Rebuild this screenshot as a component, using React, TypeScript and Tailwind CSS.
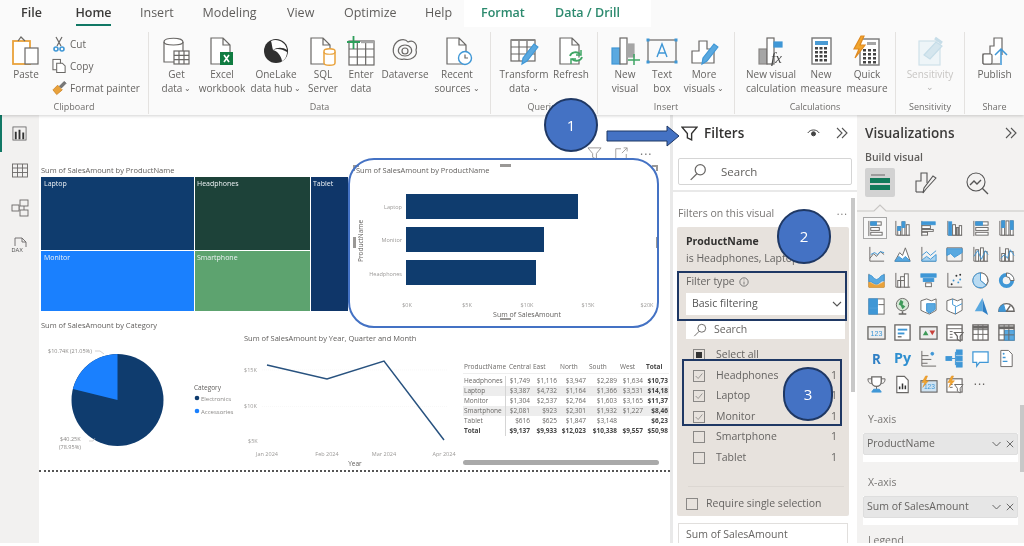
import React from 'react';

const G = '#6a6866';
const B = '#3f97d6';
const O = '#e9a23b';
const font = { fontFamily: '"Open Sans", sans-serif' };

function RI({ children }: { children: React.ReactNode }) {
  return <svg viewBox="0 0 32 32" className="w-[32px] h-[32px] shrink-0" fill="none" stroke={G} strokeWidth="1.2">{children}</svg>;
}
const Doc = ({ x = 6, w = 17, h = 26 }: { x?: number; w?: number; h?: number }) => (
  <path d={`M${x} 3h${w - 7}l7 7v${h - 7}h-${w}z M${x + w - 7} 3v7h7`} fill="#fff" />
);
const TableG = ({ x, y, w, h }: { x: number; y: number; w: number; h: number }) => (
  <g>
    <rect x={x} y={y} width={w} height={h} fill="#fff" />
    <path d={`M${x} ${y + h / 3}h${w}M${x} ${y + (2 * h) / 3}h${w}M${x + w / 3} ${y}v${h}M${x + (2 * w) / 3} ${y}v${h}`} />
  </g>
);
const Pencil = () => (
  <g>
    <path d="M30 12l-11 14-5 3 1-6 11-14z" fill="#5aa9e0" stroke={B} />
  </g>
);
const Bars = () => <path d="M4 28V16h7V6h8v8h7v14z" fill="#fff" />;

const ribbonIcons: Record<string, React.ReactNode> = {
  paste: <RI><rect x="3" y="6" width="17" height="23" stroke={O} strokeWidth="1.8" fill="#fff" /><path d="M8 6l3-4 4 4" stroke={G} /><rect x="15" y="13" width="13" height="16" fill="#fff" /></RI>,
  getdata: <RI><path d="M3 7c0-5 19-5 19 0v20H3z" fill="#fff" /><path d="M3 7c0 4 19 4 19 0" /><TableG x={13} y={16} w={15} h={13} /></RI>,
  excel: <RI><Doc x={5} w={19} /><rect x="14" y="17" width="13" height="13" fill="#107c41" stroke="none" /><path d="M18 20l5 7M23 20l-5 7" stroke="#fff" strokeWidth="1.6" /></RI>,
  onelake: <RI><circle cx="16" cy="16" r="12" fill="#2f2f2f" stroke="none" /><path d="M11 6c6-3 15 1 16 9-4-3-10-3-14 0-1-3-1-6-2-9z" fill="#fff" stroke="none" /><path d="M13 15c4 1 8 5 9 11 3-1 5-5 5-9-5-3-10-4-14-2z" fill="#fff" stroke="none" /></RI>,
  sql: <RI><Doc x={4} w={19} /><path d="M17 16c0-3 11-3 11 0v12c0 3-11 3-11 0z" stroke={O} strokeWidth="1.5" fill="#fff" /><path d="M17 17c0 3 11 3 11 0" stroke={O} /></RI>,
  enter: <RI><TableG x={4} y={6} w={25} h={24} /><path d="M2 7h13M8.5 1v13" stroke="#2e9e5b" strokeWidth="1.8" /><path d="M16 7h13" stroke="#a6a6a6" strokeWidth="2.4" /></RI>,
  dataverse: <RI><path d="M5 11c3-7 11-8 14-4 5-3 10 2 8 8 2 6-5 11-12 9C9 26 2 20 5 11z" /><path d="M10 13c3-4 9-4 12 0 2 4-1 8-6 8s-8-4-6-8z" /><circle cx="16" cy="16" r="3" /></RI>,
  recent: <RI><Doc x={6} w={19} /><circle cx="24" cy="23" r="6.5" stroke={B} fill="#fff" strokeWidth="1.4" /><path d="M24 19.5V23h3" stroke={G} /></RI>,
  transform: <RI><TableG x={3} y={5} w={24} h={21} /><path d="M3 5h24" stroke="#8a8886" strokeWidth="2" /><Pencil /></RI>,
  refresh: <RI><Doc x={5} w={19} /><path d="M15 21c1-4 7-5 10-2M27 22c-1 4-7 5-10 2" stroke="#3fa564" strokeWidth="1.8" fill="#fff" /><path d="M26 15v5h-5M16 29v-5h5" stroke="#3fa564" strokeWidth="1.5" /></RI>,
  newvisual: <RI><rect x="3" y="13" width="8" height="16" fill="#5aa9e0" stroke={B} /><rect x="11" y="3" width="7" height="26" fill="#fff" /><rect x="18" y="9" width="7" height="13" fill="#a6a6a6" stroke="#a6a6a6" /><path d="M25 19v11M19 25h12" stroke="#3fa564" strokeWidth="1.5" /></RI>,
  textbox: <RI><rect x="2" y="5" width="28" height="22" stroke={G} /><path d="M11 22l5-13 5 13M13 18h6" stroke={B} strokeWidth="1.4" /><g fill={B} stroke="none"><rect x="0.5" y="3.5" width="3" height="3" /><rect x="28.5" y="3.5" width="3" height="3" /><rect x="0.5" y="25.5" width="3" height="3" /><rect x="28.5" y="25.5" width="3" height="3" /></g></RI>,
  more: <RI><Bars /><Pencil /></RI>,
  visualcalc: <RI><rect x="4" y="14" width="8" height="15" fill="#a6a6a6" stroke="#8a8886" /><rect x="12" y="3" width="7" height="26" fill="#fff" /><rect x="19" y="7" width="8" height="5" fill={B} stroke={B} /><text x="16" y="28" fontFamily="Liberation Serif, serif" fontStyle="italic" fontSize="15" fill="#444" stroke="none">fx</text></RI>,
  measure: <RI><rect x="7" y="3" width="19" height="26" fill="#fff" stroke="#777" strokeWidth="1.4" /><rect x="10" y="6" width="13" height="4" fill="#4a9bd4" stroke="none" /><g fill="#444" stroke="none">{[13, 17, 21, 25].map((y) => [10, 14.5, 19].map((x) => <rect key={`${x}-${y}`} x={x} y={y - 1} width="3" height="2.5" />))}</g></RI>,
  quick: <RI><rect x="9" y="4" width="19" height="26" fill="#fff" stroke="#777" strokeWidth="1.4" /><rect x="16" y="7" width="9" height="3" fill="#a6a6a6" stroke="none" /><g fill="#444" stroke="none">{[15, 19, 23, 27].map((y) => [12, 17, 22].map((x) => <rect key={`${x}-${y}`} x={x} y={y - 1} width="3" height="2.5" />))}</g><path d="M10 1L3 14h5l-4 9 10-13H9l4-9z" fill="#f0a52e" stroke="#e08a20" /></RI>,
  sensitivity: <RI><rect x="5" y="6" width="21" height="24" stroke="#cfe1ea" fill="#eef5f8" /><path d="M10 20l12-13 6 4-12 13z" fill="#d5e6ee" stroke="#c6dde8" /><path d="M21 3l7 5" stroke="#c6dde8" strokeWidth="3" /></RI>,
  publish: <RI><path d="M4 29V19h7V11h4V3h8v17" fill="#fff" /><path d="M4 29h17" /><rect x="4" y="19" width="9" height="10" rx="1.5" fill="#fff" /><path d="M22 30V14M16 20l6-6 6 6" stroke={B} strokeWidth="1.5" /></RI>,
};

type Item = { i: string; w: string; l: React.ReactNode };
const chev = <span className="text-[8px] ml-[2px] align-[1px]">⌄</span>;
const groups: { name: string; w: string; pl: string; items: Item[] }[] = [
  { name: 'Data', w: 'w-[342px]', pl: 'pl-[6px]', items: [
    { i: 'getdata', w: 'w-[43px]', l: <>Get<br />data{chev}</> },
    { i: 'excel', w: 'w-[48px]', l: <>Excel<br />workbook</> },
    { i: 'onelake', w: 'w-[60px]', l: <>OneLake<br />data hub{chev}</> },
    { i: 'sql', w: 'w-[34px]', l: <>SQL<br />Server</> },
    { i: 'enter', w: 'w-[42px]', l: <>Enter<br />data</> },
    { i: 'dataverse', w: 'w-[46px]', l: <>Dataverse</> },
    { i: 'recent', w: 'w-[58px]', l: <>Recent<br />sources{chev}</> },
  ] },
  { name: 'Queries', w: 'w-[107px]', pl: 'pl-[7px]', items: [
    { i: 'transform', w: 'w-[52px]', l: <>Transform<br />data{chev}</> },
    { i: 'refresh', w: 'w-[42px]', l: <>Refresh</> },
  ] },
  { name: 'Insert', w: 'w-[137px]', pl: 'pl-[7px]', items: [
    { i: 'newvisual', w: 'w-[40px]', l: <>New<br />visual</> },
    { i: 'textbox', w: 'w-[34px]', l: <>Text<br />box</> },
    { i: 'more', w: 'w-[50px]', l: <>More<br />visuals{chev}</> },
  ] },
  { name: 'Calculations', w: 'w-[161px]', pl: 'pl-[7px]', items: [
    { i: 'visualcalc', w: 'w-[58px]', l: <>New visual<br />calculation</> },
    { i: 'measure', w: 'w-[42px]', l: <>New<br />measure</> },
    { i: 'quick', w: 'w-[50px]', l: <>Quick<br />measure</> },
  ] },
];

function RItem({ it }: { it: Item }) {
  return (
    <div className={`${it.w} flex flex-col items-center`}>
      {ribbonIcons[it.i]}
      <div className="text-[10px] leading-[14px] text-center whitespace-nowrap text-[#666462]">{it.l}</div>
    </div>
  );
}

function Group({ name, w, children, last }: { name: string; w: string; children: React.ReactNode; last?: boolean }) {
  return (
    <div className={`${w} flex flex-col ${last ? '' : 'border-r border-[#e4e2e0]'}`}>
      <div className="flex h-[69px] pt-[3px]">{children}</div>
      <div className="text-[9px] leading-[12px] text-center text-[#6f6d6b]">{name}</div>
    </div>
  );
}

function Ribbon() {
  return (
    <div className="h-[115px] bg-[#fafafa] shadow-[0_1px_3px_rgba(0,0,0,0.18)] relative z-10">
      <div className="h-[27px] flex items-center text-[12.5px] text-[#5f5d5b] whitespace-nowrap">
        <div className="ml-[21px] w-[20px] font-semibold text-[#3b3a39] text-center">File</div>
        <div className="ml-[35px] w-[35px] h-full flex flex-col items-center justify-center relative font-semibold text-[#3b3a39]">
          Home
          <div className="absolute bottom-[1px] left-0 right-0 h-[2px] bg-[#117865]" />
        </div>
        <div className="ml-[29px] w-[32px] text-center">Insert</div>
        <div className="ml-[30px] w-[55px] text-center">Modeling</div>
        <div className="ml-[30px] w-[27px] text-center">View</div>
        <div className="ml-[30px] w-[52px] text-center">Optimize</div>
        <div className="ml-[29px] w-[27px] text-center">Help</div>
        <div className="ml-[12px] h-full flex items-center bg-white pl-[17px] pr-[32px] gap-[32px] font-semibold text-[#2c8a6e]">
          <span className="w-[42px] text-center">Format</span>
          <span className="w-[64px] text-center">Data / Drill</span>
        </div>
      </div>
      <div className="h-[88px] flex pt-[5px] pb-[1px]">
        <Group name="Clipboard" w="w-[149px]">
          <div className="w-[52px] flex flex-col items-center">
            {ribbonIcons.paste}
            <div className="text-[10px] leading-[14px] text-[#666462]">Paste</div>
          </div>
          <div className="flex flex-col gap-[4px] text-[10px] leading-[18px] text-[#666462] whitespace-nowrap">
            <div className="flex items-center gap-[4px]">
              <svg viewBox="0 0 14 16" className="w-[14px] h-[16px]" fill="none" stroke={G} strokeWidth="1.2"><path d="M4 1l5 9M10 1L5 10" /><circle cx="4" cy="13" r="2" stroke={B} strokeWidth="1.6" /><circle cx="10" cy="13" r="2" stroke={B} strokeWidth="1.6" /></svg>
              Cut
            </div>
            <div className="flex items-center gap-[3px]">
              <svg viewBox="0 0 16 16" className="w-[15px] h-[16px]" fill="#fff" stroke={G} strokeWidth="1.1"><rect x="1" y="1" width="8" height="11" /><path d="M5 5h6l3 3v7H5z" /></svg>
              Copy
            </div>
            <div className="flex items-center gap-[3px]">
              <svg viewBox="0 0 16 16" className="w-[15px] h-[16px]" fill={O} stroke="#c97f1e" strokeWidth="0.8"><path d="M1 10l5-5 5 5-6 5z" /><path d="M8 6l5-5 2 2-5 5z" fill="#777" stroke="#555" /></svg>
              Format painter
            </div>
          </div>
        </Group>
        {groups.map((g) => (
          <Group key={g.name} name={g.name} w={g.w}>
            <div className={`flex ${g.pl}`}>{g.items.map((it) => <RItem key={it.i} it={it} />)}</div>
          </Group>
        ))}
        <Group name="Sensitivity" w="w-[69px]">
          <div className="w-full flex flex-col items-center">
            {ribbonIcons.sensitivity}
            <div className="text-[10px] leading-[14px] text-[#c8c6c4]">Sensitivity</div>
            <div className="text-[9px] leading-[12px] text-[#b5b3b1]">⌄</div>
          </div>
        </Group>
        <Group name="Share" w="w-[59px]" last>
          <div className="w-full flex flex-col items-center">
            {ribbonIcons.publish}
            <div className="text-[10px] leading-[14px] text-[#666462]">Publish</div>
          </div>
        </Group>
      </div>
    </div>
  );
}

function Rail() {
  return (
    <div className="w-[39px] bg-[#f2f1f0] flex flex-col items-center relative shrink-0 pt-[11px] gap-[15px]">
      <div className="absolute left-0 top-0 w-[2px] h-[37px] bg-[#117865]" />
      <svg viewBox="0 0 16 16" className="w-[15px] h-[15px]"><rect x="1" y="1" width="14" height="14" fill="none" stroke="#555" strokeWidth="0.8" /><path d="M3 14V6h2v8zM7 14V4h2v10zM11 14V7h2v7z" fill="#333" /></svg>
      <svg viewBox="0 0 16 14" className="w-[16px] h-[15px] mt-[7px]" fill="none" stroke="#6a6866" strokeWidth="0.9"><rect x="0.5" y="0.5" width="15" height="13" /><path d="M0.5 4.5h15M0.5 9h15M5.5 0.5v13M10.5 0.5v13" /></svg>
      <svg viewBox="0 0 18 18" className="w-[18px] h-[18px] mt-[6px]" fill="#f2f1f0" stroke="#6a6866" strokeWidth="0.9"><rect x="9" y="1" width="8" height="6" /><rect x="1" y="6" width="7" height="6" /><rect x="9" y="11" width="8" height="6" /><path d="M8 8h1M8 10h1M13 7v4" /></svg>
      <svg viewBox="0 0 18 18" className="w-[18px] h-[18px] mt-[5px]" fill="none" stroke="#6a6866" strokeWidth="0.9"><path d="M4 9V1h7l4 4v5M11 1v4h4" /><text x="0.5" y="15" fontSize="5.5" fontFamily="Liberation Sans" fill="#555" stroke="none">DAX</text></svg>
    </div>
  );
}

function Treemap() {
  return (
    <div className="w-[308px] shrink-0 flex flex-col">
      <div className="h-[13px] text-[7.5px] leading-[13px] text-[#605e5c] whitespace-nowrap">Sum of SalesAmount by ProductName</div>
      <div className="h-[134px] flex gap-[1px] text-[7px] leading-[14px] text-[#eef2f5]">
        <div className="w-[153px] flex flex-col gap-[1px]">
          <div className="h-[73px] bg-[#0f3c6e] px-[3px]">Laptop</div>
          <div className="flex-1 bg-[#1a80fe] px-[3px]">Monitor</div>
        </div>
        <div className="w-[115px] flex flex-col gap-[1px]">
          <div className="h-[73px] bg-[#1d4239] px-[2px]">Headphones</div>
          <div className="flex-1 bg-[#5da36f] px-[2px]">Smartphone</div>
        </div>
        <div className="w-[37px] bg-[#0f3669] px-[2px]">Tablet</div>
      </div>
    </div>
  );
}

function BarChart() {
  return (
    <svg viewBox="350 164 310 156" className="w-[310px] h-[156px] ml-[1px] shrink-0" fontFamily="Open Sans, sans-serif">
      <g fill="#9a9896">
        <rect x="353" y="165" width="6" height="2" /><rect x="353" y="165" width="2" height="6" />
        <rect x="652" y="165" width="6" height="2" /><rect x="656" y="165" width="2" height="6" />
        <rect x="500" y="164" width="11" height="3" />
        <rect x="353" y="237" width="3" height="11" /><rect x="656" y="237" width="3" height="11" />
        <rect x="500" y="318" width="11" height="2" />
      </g>
      <text x="356" y="173" fontSize="7.5" fill="#605e5c">Sum of SalesAmount by ProductName</text>
      <rect x="406" y="194" width="172" height="25" fill="#0f3c6e" />
      <rect x="406" y="227" width="138" height="25" fill="#0f3c6e" />
      <rect x="406" y="260" width="130" height="25" fill="#0f3c6e" />
      <g fontSize="5.5" fill="#9b9997" textAnchor="end">
        <text x="402" y="209">Laptop</text><text x="402" y="242">Monitor</text><text x="402" y="276">Headphones</text>
      </g>
      <text transform="translate(363 241) rotate(-90)" fontSize="6.5" fill="#605e5c" textAnchor="middle">ProductName</text>
      <g fontSize="5.5" fill="#9b9997" textAnchor="middle">
        <text x="407" y="307">$0K</text><text x="467" y="307">$5K</text><text x="527" y="307">$10K</text><text x="588" y="307">$15K</text><text x="647" y="307">$20K</text>
      </g>
      <text x="527" y="317" fontSize="7" fill="#605e5c" textAnchor="middle">Sum of SalesAmount</text>
    </svg>
  );
}

function Pie() {
  return (
    <svg viewBox="41 320 200 148" className="w-[200px] h-[148px] shrink-0" fontFamily="Open Sans, sans-serif">
      <text x="41" y="328" fontSize="7.5" fill="#605e5c">Sum of SalesAmount by Category</text>
      <circle cx="117.5" cy="400" r="46" fill="#0f3c6e" />
      <path d="M117.5 400L117.5 354A46 46 0 0 0 73 389z" fill="#1a80fe" />
      <path d="M95 351h5l4 3M89 441h4l2-3" stroke="#b5b3b1" strokeWidth="0.6" fill="none" />
      <g fontSize="5.5" fill="#8a8886">
        <text x="48" y="353">$10.74K (21.05%)</text>
        <text x="60" y="441">$40.25K</text>
        <text x="59" y="449">(78.95%)</text>
      </g>
      <text x="194" y="390" fontSize="6.5" fill="#605e5c">Category</text>
      <circle cx="197" cy="398" r="2.3" fill="#0f3c6e" />
      <circle cx="197" cy="411" r="2.3" fill="#1a80fe" />
      <g fontSize="6" fill="#8a8886">
        <text x="201" y="400.5">Electronics</text><text x="201" y="413.5">Accessories</text>
      </g>
    </svg>
  );
}

function LineChart() {
  return (
    <svg viewBox="241 320 222 148" className="w-[222px] h-[148px] shrink-0" fontFamily="Open Sans, sans-serif">
      <text x="244" y="341" fontSize="7.5" fill="#605e5c">Sum of SalesAmount by Year, Quarter and Month</text>
      <g fontSize="5.5" fill="#9b9997">
        <text x="244" y="372">$15K</text><text x="244" y="408">$10K</text><text x="248" y="443">$5K</text>
      </g>
      <path d="M262 406.500H447M262 370H447" stroke="#f3f3f3" strokeWidth="0.6" strokeDasharray="1 1" />
      <polyline points="267,365 327,379 384,361 444,440" fill="none" stroke="#28527f" strokeWidth="1.5" />
      <g fontSize="5.5" fill="#9b9997" textAnchor="middle">
        <text x="267" y="456">Jan 2024</text><text x="327" y="456">Feb 2024</text><text x="384" y="456">Mar 2024</text><text x="444" y="456">Apr 2024</text>
      </g>
      <text x="355" y="466" fontSize="6.5" fill="#605e5c" textAnchor="middle">Year</text>
    </svg>
  );
}

const rows = [
  ['Headphones', '$1,749', '$1,116', '$3,947', '$2,289', '$1,634', '$10,73'],
  ['Laptop', '$3,387', '$4,732', '$1,164', '$1,366', '$3,531', '$14,18'],
  ['Monitor', '$1,304', '$2,537', '$2,764', '$1,603', '$3,165', '$11,37'],
  ['Smartphone', '$2,081', '$923', '$2,301', '$1,932', '$1,227', '$8,46'],
  ['Tablet', '$616', '$625', '$1,847', '$3,148', '', '$6,23'],
  ['Total', '$9,137', '$9,933', '$12,023', '$10,338', '$9,557', '$50,98'],
];
const cols = 'grid grid-cols-[43px_24px_27px_29px_31px_26px_25px]';

function MatrixTable() {
  return (
    <div className="w-[206px] shrink-0 overflow-hidden pt-[42px] text-[6.5px] leading-[10px] text-[#6a6866] whitespace-nowrap">
      <div className={`${cols} h-[12px] border-b border-[#eeeeee]`}>
        <div className="pl-[1px]">ProductName</div>
        <div className="pl-[3px]">Central</div>
        <div className="pl-[3px]">East</div>
        <div className="pl-[3px]">North</div>
        <div className="pl-[3px]">South</div>
        <div className="pl-[3px]">West</div>
        <div className="pl-[3px] font-bold text-[#444]">Total</div>
      </div>
      <div className="mt-[2px]">
        {rows.map((r, i) => (
          <div key={r[0]} className={`${cols} h-[10px] ${i === 1 || i === 3 ? 'bg-[#ededed]' : ''} ${i === 5 ? 'font-bold text-[#444]' : ''}`}>
            {r.map((c, j) => (
              <div key={j} className={j === 0 ? 'pl-[1px] border-r border-[#d5d5d5]' : `text-right ${j === 6 ? 'font-bold text-[#444]' : ''}`}>{c}</div>
            ))}
          </div>
        ))}
      </div>
      <div className="mt-[24px] h-[5px] w-[196px] rounded-full bg-[#a9a9a9]" />
    </div>
  );
}

function Canvas() {
  return (
    <div className="w-[631px] shrink-0 bg-white flex flex-col pl-[2px] pt-[49px] overflow-hidden relative">
      <div className="flex h-[156px] shrink-0"><Treemap /><BarChart /></div>
      <div className="flex h-[148px] shrink-0"><Pie /><LineChart /><MatrixTable /></div>
      <div className="-ml-[2px] mt-[2px] border-b-2 border-dotted border-[#555]" />
      <div className="absolute top-[31px] left-[548px] flex items-center gap-[12px]">
        <svg viewBox="0 0 16 16" className="w-[15px] h-[15px]" fill="none" stroke="#9a9896" strokeWidth="1"><path d="M1 2h14l-5 6v6l-4-2V8z" /></svg>
        <svg viewBox="0 0 16 16" className="w-[14px] h-[14px]" fill="none" stroke="#9a9896" strokeWidth="1"><path d="M8 2H2v12h12V8M9 7l6-6M11 1h4v4" /></svg>
        <span className="text-[12px] leading-[12px] tracking-[1px] text-[#777] -mt-[6px]">...</span>
      </div>
    </div>
  );
}

function Check({ on, fill }: { on?: boolean; fill?: boolean }) {
  return (
    <span className="w-[12px] h-[12px] border border-[#8a8886] bg-[#e7e2dd] flex items-center justify-center shrink-0">
      {on && <svg viewBox="0 0 12 12" className="w-[10px] h-[10px]" fill="none" stroke="#8a8886" strokeWidth="1"><path d="M2 6l3 3 5-6" /></svg>}
      {fill && <span className="w-[6px] h-[6px] bg-[#333]" />}
    </span>
  );
}

const Search = ({ s = 18 }: { s?: number }) => (
  <svg viewBox="0 0 16 16" style={{ width: s, height: s }} fill="none" stroke="#6a6866" strokeWidth="1.1"><circle cx="10" cy="6" r="4.500" /><path d="M7 9.500l-5.500 5.500" /></svg>
);
const Chevrons = () => (
  <svg viewBox="0 0 14 12" className="w-[14px] h-[12px]" fill="none" stroke="#555" strokeWidth="1.1"><path d="M2 1l5 5-5 5M7 1l5 5-5 5" /></svg>
);

function Filters() {
  const list: [string, boolean][] = [['Headphones', true], ['Laptop', true], ['Monitor', true], ['Smartphone', false], ['Tablet', false]];
  return (
    <div className="w-[187px] shrink-0 bg-white border-l-[3px] border-[#e9e9e9] overflow-hidden">
      <div className="h-[36px] flex items-center pl-[8px] pr-[8px] text-[#323130]">
        <svg viewBox="0 0 16 16" className="w-[17px] h-[17px]" fill="none" stroke="#323130" strokeWidth="1.3"><path d="M1 2h14l-5 6v6l-4-2V8z" /></svg>
        <span className="ml-[6px] text-[13.5px] font-semibold">Filters</span>
        <svg viewBox="0 0 16 12" className="w-[13px] h-[10px] ml-auto" fill="none" stroke="#444" strokeWidth="1.2"><path d="M1 6c3-5 11-5 14 0" /><circle cx="8" cy="7" r="2.500" fill="#444" /></svg>
        <span className="ml-[15px]"><Chevrons /></span>
      </div>
      <div className="mx-[5px] mt-[7px] h-[27px] border border-[#d5d5d5] rounded-[2px] flex items-center pl-[10px] gap-[14px] text-[11.5px] text-[#605e5c]">
        <Search />
        Search
      </div>
      <div className="mt-[5px] h-[2px] bg-[#e9e9e9]" />
      <div className="mt-[15px] h-[14px] pl-[5px] pr-[9px] flex items-center justify-between text-[10.5px] text-[#797775]">
        <span>Filters on this visual</span>
        <span className="tracking-[1px] -mt-[4px]">...</span>
      </div>
      <div className="mt-[6px] ml-[4px] h-[289px] w-[172px] bg-[#e7e2dd] rounded-[2px] flex flex-col pt-[7px]">
        <div className="pl-[9px] h-[14px] text-[10.5px] leading-[14px] font-bold text-[#323130]">ProductName</div>
        <div className="pl-[9px] mt-[3px] h-[14px] text-[10.5px] leading-[14px] text-[#666462] whitespace-nowrap overflow-hidden">is Headphones, Laptop</div>
        <div className="pl-[9px] mt-[10px] h-[14px] flex items-center gap-[4px] text-[10.5px] text-[#666462]">
          Filter type
          <svg viewBox="0 0 12 12" className="w-[10px] h-[10px]" fill="none" stroke="#666" strokeWidth="1"><circle cx="6" cy="6" r="5" /><path d="M6 5.500v3.500M6 3v1" /></svg>
        </div>
        <div className="ml-[9px] mr-[3px] mt-[4px] h-[22px] bg-white flex items-center justify-between pl-[6px] pr-[4px] text-[10.5px] text-[#555]">
          Basic filtering
          <svg viewBox="0 0 10 6" className="w-[10px] h-[6px]" fill="none" stroke="#555" strokeWidth="1.1"><path d="M1 1l4 4 4-4" /></svg>
        </div>
        <div className="ml-[9px] mr-[4px] mt-[5px] h-[19px] bg-white flex items-center pl-[7px] gap-[7px] text-[10.5px] text-[#666462]">
          <Search s={14} />
          Search
        </div>
        <div className="mt-[6px] pl-[16px] pr-[12px] flex flex-col text-[10.5px] text-[#666462]">
          <div className="h-[20.500px] flex items-center gap-[11px]"><Check fill />Select all</div>
          {list.map(([n, on]) => (
            <div key={n} className="h-[20.500px] flex items-center gap-[11px]"><Check on={on} /><span className="flex-1">{n}</span><span>1</span></div>
          ))}
        </div>
        <div className="mt-[18px] ml-[11px] mr-[5px] h-[1px] bg-[#dcd7d2]" />
        <div className="mt-[9px] pl-[9px] flex items-center gap-[8px] text-[10.5px] text-[#666462] whitespace-nowrap"><Check />Require single selection</div>
      </div>
      <div className="mt-[7px] ml-[5px] w-[170px] h-[40px] border border-[#e1dfdd] pl-[7px] pt-[3px] text-[10.5px] text-[#666462]">Sum of SalesAmount</div>
    </div>
  );
}

const A = <path d="M3 2v15h15" />;
const vIcons: React.ReactNode[] = [
  <g key="0"><path d="M3 2v16" /><rect x="5" y="3" width="11" height="3.500" fill="#fff" /><rect x="5" y="3" width="6" height="3.500" fill={B} stroke={B} /><rect x="5" y="9" width="9" height="3" fill="#fff" /><rect x="5" y="14" width="12" height="3" fill="#fff" /></g>,
  <g key="1">{A}<rect x="5" y="8" width="3" height="9" fill="#fff" /><rect x="9.500" y="3" width="3" height="14" fill="#fff" /><rect x="9.500" y="3" width="3" height="6" fill={B} stroke={B} /><rect x="14" y="6" width="3" height="11" fill="#fff" /><rect x="5" y="8" width="3" height="4" fill={B} stroke={B} /></g>,
  <g key="2"><path d="M3 2v16" /><rect x="3" y="3" width="14" height="3" fill={B} stroke={B} /><rect x="3" y="7" width="9" height="3" fill="#fff" /><rect x="3" y="11" width="12" height="2" fill="#fff" /><rect x="3" y="14" width="6" height="3" fill="#fff" /></g>,
  <g key="3">{A}<rect x="4" y="3" width="3" height="14" fill={B} stroke={B} /><rect x="8" y="6" width="3" height="11" fill="#fff" /><rect x="12" y="9" width="2.500" height="8" fill="#aaa" /><rect x="15" y="7" width="2.500" height="10" fill="#fff" /></g>,
  <g key="4"><path d="M3 2v16" /><rect x="5" y="3" width="13" height="3.500" fill="#fff" /><rect x="5" y="3" width="7" height="3.500" fill={B} stroke={B} /><rect x="5" y="9" width="13" height="3" fill="#fff" /><rect x="5" y="14" width="13" height="3" fill="#fff" /></g>,
  <g key="5">{A}<rect x="5" y="2" width="3" height="15" fill="#fff" /><rect x="5" y="2" width="3" height="7" fill={B} stroke={B} /><rect x="9.500" y="2" width="3" height="15" fill="#fff" /><rect x="14" y="2" width="3" height="15" fill="#fff" /><rect x="14" y="2" width="3" height="9" fill={B} stroke={B} /></g>,
  <g key="6">{A}<path d="M3 14l4-5 3 3 4-5 4 3" /><path d="M4 10l4-2 3 2 3-3 4 1" stroke={B} /></g>,
  <g key="7"><path d="M2 17h16" /><path d="M2 17l5-9 3 3 3-8 5 14z" fill="#fff" /><path d="M2 17l4-5 4 3 3-3 5 5z" fill="#5aa9e0" stroke={B} /></g>,
  <g key="8">{A}<path d="M3 11l5-4 4 4 6-5" stroke={B} /><path d="M3 16l5-4 4 3 6-5v7H3z" fill="#a9d2ee" stroke={B} /></g>,
  <g key="9"><path d="M2 3h16v14H2z" /><path d="M2 4h16v4l-8 5-4-4-4 2z" fill="#5aa9e0" stroke={B} /></g>,
  <g key="10">{A}<rect x="5" y="5" width="3" height="12" fill="#fff" /><rect x="10" y="3" width="3" height="14" fill="#fff" /><rect x="14" y="7" width="3" height="10" fill="#fff" /><path d="M3 12l4-6 4 9 4-9 3 4" stroke={B} /></g>,
  <g key="11">{A}<rect x="5" y="9" width="3" height="8" fill="#fff" /><rect x="9" y="4" width="3" height="13" fill="#fff" /><rect x="13" y="7" width="4" height="10" fill="#fff" /><path d="M4 14l4-4 3 4 3-9 4 6" stroke={B} /></g>,
  <g key="12"><path d="M2 3v14h16V3" /><path d="M2 4c4 0 5 5 8 5s4-5 8-5v6c-4 0-5 4-8 4s-4-3-8-3z" fill="#5aa9e0" stroke={B} /><path d="M2 12c3 0 5 3 8 3s5-3 8-3v5H2z" fill={O} stroke={O} /></g>,
  <g key="13">{A}<rect x="5" y="10" width="3" height="7" fill="#fff" /><rect x="8" y="6" width="4" height="4" fill="#fff" /><rect x="12" y="3" width="4" height="14" fill="#fff" /><path d="M8 10v7" /></g>,
  <g key="14"><rect x="2" y="3" width="16" height="3.500" fill={B} stroke={B} /><rect x="4.500" y="8" width="11" height="3" fill={B} stroke={B} /><rect x="7" y="12.500" width="6" height="4" fill="#fff" /></g>,
  <g key="15">{A}<g fill="#333" stroke="none"><circle cx="7" cy="14" r="1" /><circle cx="12" cy="5" r="1" /><circle cx="16" cy="4" r="1" /></g><g fill={B} stroke="none"><circle cx="9" cy="10" r="1" /><circle cx="14" cy="12" r="1" /><circle cx="16" cy="9" r="1" /></g></g>,
  <g key="16"><circle cx="10" cy="10" r="8" fill="#fff" /><path d="M10 10V2a8 8 0 0 1 6 13z" fill="#fff" /><path d="M10 10l6 5a8 8 0 0 1-14-5 8 8 0 0 1 8-8z" fill="#b9dbf2" stroke={B} /></g>,
  <g key="17"><circle cx="10" cy="10" r="6" fill="none" stroke={B} strokeWidth="4" /><path d="M10 2a8 8 0 0 1 8 8h-4a4 4 0 0 0-4-4z" fill="#fff" stroke={G} /></g>,
  <g key="18"><rect x="2" y="2" width="16" height="16" fill="#fff" /><rect x="2" y="2" width="9" height="9" fill={B} stroke={B} /><rect x="2" y="12" width="9" height="6" fill={B} stroke={B} /><path d="M12 8h6" /></g>,
  <g key="19"><circle cx="10" cy="8" r="6.500" fill="#d8e8d8" /><path d="M8 3l3 2-1 3 3 2-3 3-2-4-2-1z" fill="#3f9a5a" stroke="none" /><path d="M6 18h8M10 15v3" strokeWidth="1.6" /></g>,
  <g key="20"><path d="M2 4l6-2 5 2 5-2v12l-7 4-5-2-4-2z" fill="#fff" /><path d="M8 7l9 0v6l-6 4-3-2z" fill="#5aa9e0" stroke={B} /></g>,
  <g key="21"><path d="M2 4l6-2 5 2 5-2v12l-7 4-5-2-4-2z" fill="#fff" /><path d="M8 2v6l4 2 6-3M11 10v8" stroke={B} /></g>,
  <g key="22"><path d="M12 1l6 18-6-4z" fill="#2f7fc4" stroke="none" /><path d="M12 1L4 15l8 0z" fill="#5aa9e0" stroke="none" /></g>,
  <g key="23"><path d="M2 15a8 8 0 0 1 16 0z" fill="#fff" strokeWidth="1.500" /><path d="M2 15a8 8 0 0 1 5-7l2 7z" fill={B} stroke={B} /><path d="M10 15l4-6" strokeWidth="1.500" /></g>,
  <g key="24"><rect x="1" y="4" width="18" height="13" fill="#eee" strokeWidth="1.400" /><text x="10" y="14" fontSize="7.500" textAnchor="middle" fill={B} stroke="none" fontFamily="Liberation Sans">123</text></g>,
  <g key="25"><rect x="2" y="2" width="16" height="16" fill="#fff" strokeWidth="1.400" /><path d="M5 7h10" stroke={B} strokeWidth="2" /><path d="M5 11h7" stroke={B} strokeWidth="2" /><path d="M5 14.500h4" strokeWidth="1.400" /></g>,
  <g key="26"><rect x="1" y="4" width="18" height="13" fill="#eee" strokeWidth="1.400" /><path d="M4 13l3-5 3 5z" fill="#3f9a5a" stroke="none" /><path d="M11 8h6l-3 5z" fill="#c8403a" stroke="none" /></g>,
  <g key="27"><rect x="2" y="2" width="16" height="16" fill="#fff" strokeWidth="1.400" /><path d="M2 6h16M5 9h3M5 12h3M5 15h3" /><path d="M10 10h9l-3 4v5l-3-2v-3z" fill="#fff" strokeWidth="1.300" /></g>,
  <g key="28"><rect x="2" y="2" width="16" height="16" fill="#fff" strokeWidth="1.400" /><path d="M2 7h16M2 12h16M7.500 2v16M12.500 2v16" /><path d="M2 4.500h16" strokeWidth="3" /></g>,
  <g key="29"><rect x="2" y="2" width="16" height="16" fill="#fff" strokeWidth="1.400" /><path d="M2 5h16" strokeWidth="3" /><rect x="8" y="8" width="10" height="10" fill="#5aa9e0" stroke={B} /><path d="M2 12.500h16M7.500 2v16M12.500 2v16" /></g>,
  <text key="30" x="10" y="16" fontSize="14" fontWeight="700" textAnchor="middle" fill="#2f7fc4" stroke="none" fontFamily="Open Sans">R</text>,
  <text key="31" x="10" y="15" fontSize="15" fontWeight="700" textAnchor="middle" fill="#2f8fd0" stroke="none" fontFamily="Open Sans">Py</text>,
  <g key="32"><path d="M3 2v16h15M3 7h7M3 11h10M3 15h6" /><circle cx="14" cy="5" r="1.500" fill={B} stroke={B} /></g>,
  <g key="33"><rect x="1" y="8" width="6" height="4" fill={B} stroke={B} /><path d="M7 10h4M11 3v14" stroke={B} /><rect x="12" y="1" width="6" height="5" fill={B} stroke={B} /><rect x="12" y="7.500" width="6" height="5" fill={B} stroke={B} /><rect x="12" y="14" width="6" height="5" fill={B} stroke={B} /></g>,
  <path key="34" d="M2 3h16v11H9l-3 4v-4H2z" fill="#fff" stroke={B} strokeWidth="1.300" />,
  <g key="35"><path d="M4 1.500h8l4 4v13H4z" fill="#fff" /><path d="M6 9h3M6 13h5" stroke={B} strokeWidth="1.500" /><circle cx="7" cy="5" r="1" fill={B} stroke="none" /></g>,
  <g key="36"><path d="M5 2h10v5a5 5 0 0 1-10 0z" fill="#fff" strokeWidth="1.400" /><path d="M5 4H1c0 4 2 5 4 5M15 4h4c0 4-2 5-4 5M10 12v3" /><path d="M5 18l2-3h6l2 3z" fill={B} stroke={B} /></g>,
  <g key="37"><path d="M4 1.500h8l4 4v13H4z" fill="#fff" strokeWidth="1.200" /><path d="M7 15v-3M10 15v-6M13 15v-4" stroke="#333" strokeWidth="1.600" /></g>,
  <g key="38"><rect x="2" y="6" width="17" height="12" fill="#cfe3f2" strokeWidth="1.200" /><text x="11" y="15" fontSize="7" textAnchor="middle" fill={B} stroke="none" fontFamily="Liberation Sans">123</text><path d="M7 1L3 8h3l-2 5 6-7H7l2-5z" fill="#f0a52e" stroke="#e08a20" strokeWidth="0.500" /></g>,
  <g key="39"><rect x="2" y="4" width="16" height="14" fill="#fff" strokeWidth="1.200" /><path d="M5 10h3M5 13h3" /><path d="M10 10h9l-3 4v5l-3-2v-3z" fill="#fff" /><path d="M7 1L3 8h3l-2 5 6-7H7l2-5z" fill="#f0a52e" stroke="#e08a20" strokeWidth="0.500" /></g>,
];

function Field({ label, mt }: { label: string; mt: string }) {
  return (
    <div className={mt}>
      <div className="h-[14px] text-[10.5px] leading-[14px] text-[#797775] pl-[5px]">{label}</div>
      <div className="mt-[7px] bg-white pb-[7px]">
        <div className="h-[22px] bg-[#e6e6e6] border border-[#dedede] rounded-[2px] flex items-center pl-[3px] pr-[3px] text-[10.5px] text-[#666462] whitespace-nowrap">
          <span className="flex-1">{label === 'Y-axis' ? 'ProductName' : 'Sum of SalesAmount'}</span>
          <svg viewBox="0 0 10 6" className="w-[11px] h-[6px]" fill="none" stroke="#666" strokeWidth="1"><path d="M1 1l4 4 4-4" /></svg>
          <svg viewBox="0 0 10 10" className="w-[8px] h-[8px] ml-[4px]" fill="none" stroke="#666" strokeWidth="1.200"><path d="M1 1l8 8M9 1l-8 8" /></svg>
        </div>
      </div>
    </div>
  );
}

function Viz() {
  return (
    <div className="w-[167px] shrink-0 bg-[#f3f2f1] overflow-hidden relative">
      <div className="h-[20px] mt-[8px] pl-[8px] pr-[6px] flex items-center justify-between text-[13.5px] font-semibold text-[#3b3a39]">
        Visualizations
        <Chevrons />
      </div>
      <div className="mt-[7px] h-[14px] pl-[8px] text-[10.5px] leading-[14px] font-semibold text-[#605e5c]">Build visual</div>
      <div className="mt-[4px] h-[29px] flex items-center pl-[8px]">
        <div className="w-[30px] h-[29px] bg-[#d2d2d2] rounded-[2px] flex items-center justify-center">
          <svg viewBox="0 0 22 20" className="w-[22px] h-[20px]"><path d="M2 2h14" stroke="#666" strokeWidth="1" /><rect x="1" y="5" width="20" height="5" fill="#127a5a" /><rect x="1" y="12" width="20" height="5" fill="#127a5a" /></svg>
        </div>
        <svg viewBox="0 0 24 24" className="w-[24px] h-[24px] ml-[19px]" fill="none" stroke="#555" strokeWidth="1.100"><path d="M2 21V10h5V2h6v10" /><path d="M2 21h8" /><path d="M22 7L12 18l-3 4 1-5 9-12z" fill="#f3f2f1" /></svg>
        <svg viewBox="0 0 24 24" className="w-[24px] h-[24px] ml-[27px]" fill="none" stroke="#555" strokeWidth="1.100"><circle cx="11" cy="11" r="9" /><path d="M5 14l4-4 3 3 4-4M17 17l6 6" strokeWidth="1.400" /></svg>
      </div>
      <svg viewBox="0 0 167 9" className="block w-[167px] h-[9px] mt-[6px]" fill="none" stroke="#c8c6c4" strokeWidth="1.200"><path d="M0 8H17l6-6 6 6H167" /></svg>
      <div className="grid grid-cols-[repeat(6,26px)] auto-rows-[26px] pl-[6px] mt-[3px]">
        {vIcons.map((ic, i) => (
          <div key={i} className={`flex items-center justify-center ${i === 0 ? 'border border-[#a6a6a6] bg-[#f8f8f8] h-[22px] w-[24px] mt-[2px]' : ''}`}>
            <svg viewBox="0 0 20 20" className="w-[19px] h-[19px]" fill="none" stroke={G} strokeWidth="1">{ic}</svg>
          </div>
        ))}
        <div className="flex items-center justify-center text-[12px] leading-[12px] tracking-[1px] text-[#605e5c] -mt-[6px]">...</div>
      </div>
      <div className="px-[6px]">
        <Field label="Y-axis" mt="mt-[15px]" />
        <Field label="X-axis" mt="mt-[13px]" />
        <div className="mt-[8px] h-[14px] text-[10.5px] leading-[14px] text-[#797775] pl-[5px]">Legend</div>
      </div>
      <div className="absolute right-0 top-[290px] w-[4px] h-[67px] bg-[#c8c8c8]" />
    </div>
  );
}

const Badge = ({ n, cls }: { n: string; cls: string }) => (
  <div className={`absolute rounded-full bg-[#4472c4] border-2 border-[#1f3864] flex items-center justify-center text-white text-[15px] z-20 ${cls}`}>{n}</div>
);

export default function App() {
  return (
    <div className="relative w-[1024px] h-[546px] bg-white overflow-hidden blur-[0.35px]" style={font}>
      <Ribbon />
      <div className="flex h-[428px]">
        <Rail />
        <Canvas />
        <Filters />
        <Viz />
      </div>
      <div className="absolute z-20 left-[348px] top-[158px] w-[311px] h-[170px] rounded-[26px] border-2 border-[#4472c4]" />
      <Badge n="1" cls="left-[544px] top-[98px] w-[54px] h-[54px]" />
      <svg viewBox="0 0 74 22" className="absolute z-20 left-[606px] top-[125px] w-[74px] h-[22px]"><path d="M1 6h60V1l12 10-12 10v-5H1z" fill="#4472c4" stroke="#1f3864" strokeWidth="1" /></svg>
      <Badge n="2" cls="left-[777px] top-[209px] w-[54px] h-[55px]" />
      <Badge n="3" cls="left-[783px] top-[367px] w-[50px] h-[54px]" />
      <div className="absolute z-20 left-[677px] top-[271px] w-[170px] h-[50px] border-2 border-[#1f3864]" />
      <div className="absolute z-20 left-[682px] top-[359px] w-[160px] h-[67px] border-2 border-[#1f3864]" />
      <div className="absolute z-20 left-[851px] top-[198px] w-[4px] h-[194px] bg-[#c8c8c8]" />
    </div>
  );
}
